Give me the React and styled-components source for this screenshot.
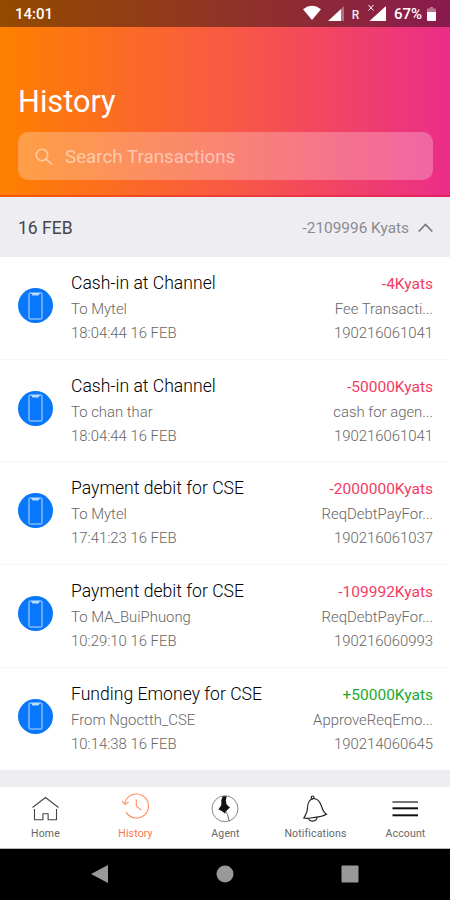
import React from "react";
import styled, { createGlobalStyle } from "styled-components";

/**
 * ------------------------------ styled components ---------------------------
 */

const GlobalStyle = createGlobalStyle`
    * {
        box-sizing: border-box;
    }
    body {
        margin: 0;
        background: #eeeef2;
        font-family: Roboto, "Liberation Sans", sans-serif;
    }
`;

// whole phone screen
const Screen = styled.div`
    width: 450px;
    height: 900px;
    display: flex;
    flex-direction: column;
    background: #eeeef2;
    overflow: hidden;
`;

const Header = styled.header`
    height: 197px;
    flex: none;
    background: linear-gradient(90deg, #ff8000 0%, #f85a43 50%, #eb2d88 100%);
    border-bottom: 2px solid rgba(215, 0, 20, 0.3);
    background-origin: border-box;
`;

const StatusBar = styled.div`
    height: 27px;
    display: flex;
    justify-content: space-between;
    align-items: center;
    padding: 1px 14px 0 15px;
    background: rgba(0, 0, 0, 0.42);
    color: #ffffff;
    font-size: 15px;
    font-weight: 500;
`;

const StatusIcons = styled.div`
    display: flex;
    align-items: center;
`;

const Battery = styled.span`
    margin: 0 5px 0 7px;
`;

const Title = styled.h1`
    margin: 57px 18px 12px;
    height: 36px;
    line-height: 36px;
    font-size: 30.7px;
    font-weight: 400;
    color: #ffffff;
`;

const SearchBox = styled.div`
    height: 48px;
    margin: 0 17px 0 18px;
    padding: 2px 17px 0;
    display: flex;
    align-items: center;
    gap: 12px;
    border-radius: 10px;
    background: rgba(255, 255, 255, 0.26);
    color: rgba(255, 255, 255, 0.5);
    font-size: 18.8px;
`;

const DayBar = styled.div`
    height: 60px;
    flex: none;
    display: flex;
    align-items: center;
    padding: 1px 17px 0 18px;
    color: #45454a;
    font-size: 17.5px;
`;

const DayTotal = styled.span`
    margin-left: auto;
    margin-right: 9px;
    font-size: 15.4px;
    color: #8b8b90;
`;

const List = styled.div`
    flex: none;
    height: 513px;
    background: #ffffff;
`;

// one transaction
const Row = styled.div`
    height: 102.7px;
    padding: 14px 17px 0 18px;
    display: flex;
    border-bottom: 1px solid #f7f7f8;
    &:last-child {
        border-bottom: none;
    }
`;

const PhoneBadge = styled.div`
    width: 35px;
    height: 35px;
    margin: 17px 18px 0 0;
    flex: none;
    border-radius: 50%;
    background: #0877fb;
    display: flex;
    align-items: center;
    justify-content: center;
`;

const Column = styled.div`
    display: flex;
    flex-direction: column;
    margin-left: ${(props) => (props.$right ? "auto" : "0")};
    text-align: ${(props) => (props.$right ? "right" : "left")};
    white-space: nowrap;
`;

const Name = styled.div`
    height: 26px;
    line-height: 24px;
    font-size: 17.6px;
    font-weight: 300;
    color: #000000;
`;

const Amount = styled.div`
    height: 26px;
    line-height: 26px;
    font-size: 15.5px;
    color: ${(props) => (props.$income ? "#22a92b" : "#f43b62")};
`;

const Detail = styled.div`
    height: 24px;
    line-height: 25px;
    font-size: 14.9px;
    font-weight: 300;
    color: #666666;
`;

const TabBar = styled.nav`
    margin-top: auto;
    height: 62px;
    flex: none;
    display: grid;
    grid-template-columns: repeat(5, 1fr);
    background: #ffffff;
    border-bottom: 1px solid #bbbbbb;
`;

const Tab = styled.div`
    display: flex;
    flex-direction: column;
    align-items: center;
    padding: 4px 0 0 1px;
    color: ${(props) => (props.$active ? "#ff7448" : "#666666")};
    font-size: 10.5px;
    letter-spacing: 0.15px;
    line-height: 14px;
    svg {
        flex: none;
    }
`;

const NavBar = styled.div`
    height: 51px;
    flex: none;
    display: flex;
    align-items: center;
    justify-content: center;
    gap: 107px;
    padding-bottom: 1px;
    background: #000000;
`;

/**
 * --------------------------------- icons -----------------------------------
 */

const SignalIcons = () => (
    <svg width="84" height="20" viewBox="0 0 84 20" fill="#fff">
        <path d="M0 5.2 Q9 -1.6 18 5.2 L9 16Z" />
        <path d="M25 17 L38 5 V17Z" />
        <path d="M38 5 L41 2 V17 H38Z" opacity=".35" />
        <text x="48.8" y="15.2" fontSize="12" fontWeight="500" opacity=".9">R</text>
        <path d="M66.5 17 L83 2 V17Z" />
        <path d="M65.5 1 L70.5 6.5 M70.5 1 L65.5 6.5" stroke="#fff" strokeWidth="1" />
    </svg>
);

const BatteryIcon = () => (
    <svg width="9" height="16" viewBox="0 0 9 16" fill="#fff">
        <path d="M3 1 H6 V2.5 H9 V6 H0 V2.5 H3Z" opacity=".4" />
        <path d="M0 6 H9 V14 Q9 15 8 15 H1 Q0 15 0 14Z" />
    </svg>
);

const SearchIcon = () => (
    <svg width="18" height="18" viewBox="0 0 18 18" fill="none" stroke="currentColor" strokeWidth="1.6">
        <circle cx="7" cy="7" r="5.7" />
        <path d="M11.3 11.3 L17 16.5" />
    </svg>
);

const ArrowUp = () => (
    <svg width="15" height="10" viewBox="0 0 15 10" fill="none" stroke="#77777c" strokeWidth="1.7">
        <path d="M0.7 8.5 L7.5 1.5 L14.3 8.5" />
    </svg>
);

const PhoneIcon = () => (
    <svg width="15" height="28" viewBox="0 0 15 28" fill="none" stroke="#b9dcff" strokeWidth="1">
        <rect x="1" y="1" width="13" height="26" rx="0.8" />
        <path d="M3 1 H12 L10.5 3.4 H4.5Z" fill="#b9dcff" stroke="none" />
    </svg>
);

const HomeIcon = () => (
    <svg width="32" height="36" viewBox="0 0 32 36" fill="none" stroke="#444" strokeWidth="1.1">
        <path d="M2.5 16.5 L15.5 6.5 L28.5 16.5" />
        <path d="M4.5 18 V28.8 H12.9 V22.8 H18.1 V28.8 H26.5 V18" />
    </svg>
);

const HistoryIcon = () => (
    <svg width="32" height="36" viewBox="0 0 32 36" fill="none" stroke="#ff8b62" strokeWidth="1.1">
        <path d="M4.8 12.3 A12 12 0 1 1 6.1 21.1" />
        <path d="M2.2 10 L4.8 13.4 L8.6 11" />
        <path d="M16.3 8.6 V15.1 L21.3 19.1" />
    </svg>
);

const AgentIcon = () => (
    <svg width="32" height="36" viewBox="0 0 32 36" fill="none">
        <circle cx="15" cy="17.7" r="13" stroke="#888" strokeWidth="1" />
        <path d="M11.3 9 L12.8 5.3 L16.7 5.3 L15.8 9.5 L16.6 13.6 L20 16.4 L17 19.2 L15 22.5 L11.8 20 L8.5 18.4 L11.3 14Z" fill="#111" />
        <path d="M15.5 20.5 L17.5 23.5 L19.3 30" stroke="#666" strokeWidth="1" />
    </svg>
);

const BellIcon = () => (
    <svg width="32" height="36" viewBox="0 0 32 36" fill="none" stroke="#222" strokeWidth="1.2">
        <path d="M13 7.5 C8 9 7.5 13 7.5 17 C7.5 22 5.5 24 3.8 27 C7 28 11 26.8 15 26.3 C19 26 23.5 25 26.5 23.3 C23 21.5 22.5 17.5 21 14 C19.3 9.5 16.5 7.3 13 7.5Z" />
        <circle cx="12.6" cy="6.4" r="1.4" />
        <path d="M8.8 27.5 C9 31.2 16.5 31.2 17 26.5" />
    </svg>
);

const MenuIcon = () => (
    <svg width="32" height="36" viewBox="0 0 32 36" fill="none" stroke="#111" strokeWidth="2">
        <path d="M2.5 11 H28" stroke="#777" />
        <path d="M2.5 17.3 H28" />
        <path d="M2.5 24.3 H28" />
    </svg>
);

/**
 * --------------------------------- data -----------------------------------
 */

const transactions = [
    { name: "Cash-in at Channel", who: "To Mytel", time: "18:04:44 16 FEB", amount: "-4Kyats", note: "Fee Transacti...", code: "190216061041" },
    { name: "Cash-in at Channel", who: "To chan thar", time: "18:04:44 16 FEB", amount: "-50000Kyats", note: "cash for agen...", code: "190216061041" },
    { name: "Payment debit for CSE", who: "To Mytel", time: "17:41:23 16 FEB", amount: "-2000000Kyats", note: "ReqDebtPayFor...", code: "190216061037" },
    { name: "Payment debit for CSE", who: "To MA_BuiPhuong", time: "10:29:10 16 FEB", amount: "-109992Kyats", note: "ReqDebtPayFor...", code: "190216060993" },
    { name: "Funding Emoney for CSE", who: "From Ngoctth_CSE", time: "10:14:38 16 FEB", amount: "+50000Kyats", note: "ApproveReqEmo...", code: "190214060645", income: true },
];

const tabs = [
    { text: "Home", Icon: HomeIcon },
    { text: "History", Icon: HistoryIcon, active: true },
    { text: "Agent", Icon: AgentIcon },
    { text: "Notifications", Icon: BellIcon },
    { text: "Account", Icon: MenuIcon },
];

/**
 * --------------------------------- components -----------------------------------
 */

const Transaction = ({ item }) => {
    return (
        <Row>
            <PhoneBadge>
                <PhoneIcon />
            </PhoneBadge>
            <Column>
                <Name>{item.name}</Name>
                <Detail>{item.who}</Detail>
                <Detail>{item.time}</Detail>
            </Column>
            <Column $right>
                <Amount $income={item.income}>{item.amount}</Amount>
                <Detail>{item.note}</Detail>
                <Detail>{item.code}</Detail>
            </Column>
        </Row>
    );
};

const App = () => {
    return (
        <>
            <GlobalStyle />
            <Screen>
                <Header>
                    <StatusBar>
                        <span>14:01</span>
                        <StatusIcons>
                            <SignalIcons />
                            <Battery>67%</Battery>
                            <BatteryIcon />
                        </StatusIcons>
                    </StatusBar>
                    <Title>History</Title>
                    <SearchBox>
                        <SearchIcon />
                        <span>Search Transactions</span>
                    </SearchBox>
                </Header>
                <DayBar>
                    <span>16 FEB</span>
                    <DayTotal>-2109996 Kyats</DayTotal>
                    <ArrowUp />
                </DayBar>
                <List>
                    {transactions.map((item, i) => (
                        <Transaction key={i} item={item} />
                    ))}
                </List>
                <TabBar>
                    {tabs.map(({ text, Icon, active }) => (
                        <Tab key={text} $active={active}>
                            <Icon />
                            {text}
                        </Tab>
                    ))}
                </TabBar>
                <NavBar>
                    <svg width="18" height="18" viewBox="0 0 18 18" fill="#999">
                        <path d="M17 0 V18 L0 9Z" />
                    </svg>
                    <svg width="18" height="18" viewBox="0 0 18 18" fill="#999">
                        <circle cx="9" cy="9" r="8.5" />
                    </svg>
                    <svg width="18" height="18" viewBox="0 0 18 18" fill="#999">
                        <rect x="0.5" y="0.5" width="17" height="17" rx="1" />
                    </svg>
                </NavBar>
            </Screen>
        </>
    );
};

export default App;
